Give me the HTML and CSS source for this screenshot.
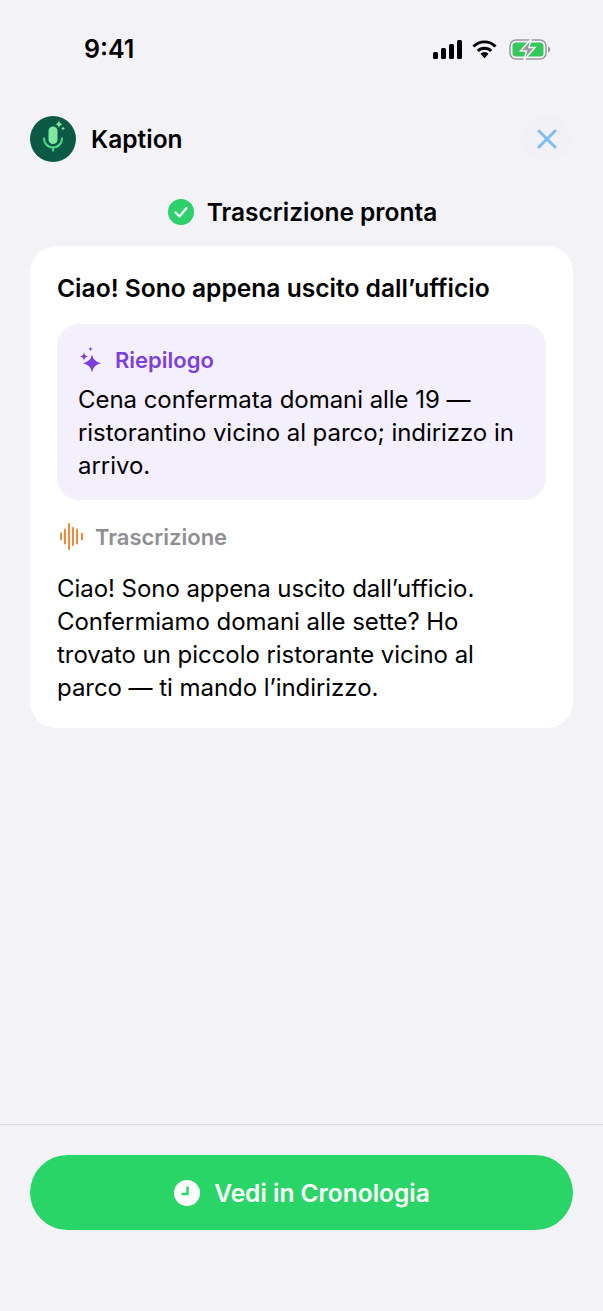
FILE: index.html
```html
<!DOCTYPE html>
<html>
<head>
  <title>Kaption</title>
  <link rel="stylesheet" href="styles.css">
</head>
<body>
  <div class="screen">
    <div class="status-bar">
      <span class="clock">9:41</span>
      <div class="status-icons">
        <svg class="signal" width="29" height="19" viewBox="0 0 29 19"><g fill="#000"><rect x="0" y="12" width="5" height="7" rx="1.500"/><rect x="8" y="8" width="5" height="11" rx="1.500"/><rect x="16" y="4" width="5" height="15" rx="1.500"/><rect x="24" y="0" width="5" height="19" rx="1.500"/></g></svg>
        <svg class="wifi" width="25" height="19" viewBox="0 0 26 19"><g fill="none" stroke="#000" stroke-width="3"><path d="M1.500 6.500a16 16 0 0 1 23 0"/><path d="M6 11a10 10 0 0 1 14 0"/></g><path d="M8.800 13.800a6 6 0 0 1 8.400 0L13 18.500z" fill="#000"/></svg>
        <svg width="42" height="21" viewBox="0 0 42 21">
          <rect x="1" y="1" width="36" height="19" rx="6" fill="none" stroke="#9a9a9e" stroke-width="1.500"/>
          <rect x="3.500" y="3.500" width="31" height="14" rx="3.500" fill="#34c759"/>
          <path d="M39 7.500c1.500.4 2.200 1.500 2.200 3s-.7 2.600-2.200 3z" fill="#9a9a9e"/>
          <path d="M22 0 11.500 12h6L15 21l11-12.500h-6z" fill="#9a9a9e" stroke="#f2f2f7" stroke-width="1.500"/>
        </svg>
      </div>
    </div>

    <div class="top-row">
      <div class="brand">
        <div class="logo">
          <svg width="46" height="46" viewBox="0 0 46 46">
            <rect x="18.500" y="10.500" width="9" height="17.500" rx="4.500" fill="#7fe8a0"/>
            <path d="M14 22.500a9 9 0 0 0 18 0" fill="none" stroke="#4fd685" stroke-width="2.200" stroke-linecap="round"/>
            <path d="M23 31.500v3" stroke="#4fd685" stroke-width="2.200" stroke-linecap="round"/>
            <path d="M29 4.500q.6 3.200 3.500 3.800-2.900.6-3.500 3.800-.6-3.200-3.500-3.800 2.900-.6 3.500-3.800zM33 10.500q.3 1.700 2 2-1.700.3-2 2-.3-1.700-2-2 1.700-.3 2-2z" fill="#7fe8a0"/>
          </svg>
        </div>
        <span class="brand-name">Kaption</span>
      </div>
      <div class="close-btn">
        <svg width="20" height="20" viewBox="0 0 20 20"><path d="M2 2l16 16M18 2L2 18" stroke="#7dbcf5" stroke-width="3" stroke-linecap="round"/></svg>
      </div>
    </div>

    <div class="ready-row">
      <svg width="26" height="26" viewBox="0 0 26 26"><circle cx="13" cy="13" r="13" fill="#2dd06a"/><path d="M7.500 13.500l4 4 7-8.500" fill="none" stroke="#fff" stroke-width="2.200" stroke-linecap="round" stroke-linejoin="round"/></svg>
      <span class="ready-text">Trascrizione pronta</span>
    </div>

    <div class="card">
      <div class="card-title">Ciao! Sono appena uscito dall’ufficio</div>

      <div class="summary">
        <div class="summary-head">
          <svg width="25" height="27" viewBox="0 0 25 27" fill="#7c3fdc">
            <path d="M14 8.500q1.300 7.200 9 8.700-7.700 1.500-9 9.300-1.300-7.800-9-9.300 7.700-1.500 9-8.700z"/>
            <path d="M6 6.500q.6 3.400 4 4-3.400.6-4 4-.6-3.400-4-4 3.400-.6 4-4z"/>
            <path d="M12.500 1q.3 1.700 2 2-1.700.3-2 2-.3-1.700-2-2 1.700-.3 2-2z"/>
          </svg>
          <span>Riepilogo</span>
        </div>
        <p class="summary-text">Cena confermata domani alle 19 — ristorantino vicino al parco; indirizzo in arrivo.</p>
      </div>

      <div class="transcript-head">
        <svg width="25" height="27" viewBox="0 0 25 27" fill="none" stroke="#f08a3c" stroke-width="2" stroke-linecap="round">
          <path d="M2 10.500v6M6 6.500v14M10 1v25M14 5v17M18 6.500v14M23 10.500v6"/>
        </svg>
        <span>Trascrizione</span>
      </div>
      <p class="transcript-text">Ciao! Sono appena uscito dall’ufficio. Confermiamo domani alle sette? Ho trovato un piccolo ristorante vicino al parco — ti mando l’indirizzo.</p>
    </div>

    <div class="footer">
      <div class="history-btn">
        <svg width="26" height="26" viewBox="0 0 26 26"><circle cx="13" cy="13" r="13" fill="#fff"/><path d="M13.500 6.500v7.500H7.500" fill="none" stroke="#2ad567" stroke-width="2.400"/></svg>
        <span>Vedi in Cronologia</span>
      </div>
    </div>
  </div>
</body>
</html>
```

FILE: styles.css
```css
body {
  margin: 0;
  background-color: #f2f2f7;
  font-family: 'Inter', 'Liberation Sans', sans-serif;
  color: #000;
}

.screen {
  width: 603px;
  height: 1311px;
  display: flex;
  flex-direction: column;
  overflow: hidden;
}

.status-bar {
  display: flex;
  justify-content: space-between;
  align-items: center;
  height: 34px;
  padding: 32px 52px 0 84px;
}

.clock {
  font-size: 25px;
  font-weight: 600;
}

.status-icons {
  display: flex;
  align-items: center;
}

.signal {
  margin-right: 10px;
}

.wifi {
  margin-right: 12px;
}

.top-row {
  display: flex;
  justify-content: space-between;
  align-items: center;
  margin-top: 50px;
  padding: 0 33px 0 30px;
}

.brand {
  display: flex;
  align-items: center;
  gap: 15px;
}

.logo {
  width: 46px;
  height: 46px;
  border-radius: 50%;
  background-color: #0c5946;
}

.brand-name {
  font-size: 24.5px;
  font-weight: 600;
}

.close-btn {
  width: 46px;
  height: 46px;
  border-radius: 50%;
  background-color: #f0f0f5;
  display: flex;
  justify-content: center;
  align-items: center;
}

.ready-row {
  display: flex;
  justify-content: center;
  align-items: center;
  gap: 13px;
  margin-top: 35px;
  padding-left: 2px;
}

.ready-text {
  font-size: 24.5px;
  font-weight: 600;
}

.card {
  margin: 19px 30px 0;
  padding: 26px 27px 24px;
  background-color: #fff;
  border-radius: 26px;
}

.card-title {
  font-size: 24.6px;
  font-weight: 600;
  line-height: 32px;
}

.summary {
  margin-top: 20px;
  padding: 22px 21px 18px 21px;
  background-color: #f4effd;
  border-radius: 22px;
}

.summary-head {
  display: flex;
  align-items: center;
  gap: 12px;
  color: #7c3fdc;
  font-size: 22px;
  font-weight: 600;
}

.summary-text {
  margin: 10px 0 0;
  font-size: 24px;
  line-height: 33px;
  letter-spacing: -0.05px;
}

.transcript-head {
  display: flex;
  align-items: center;
  gap: 11px;
  margin-top: 23px;
  padding-left: 2px;
  color: #8e8e93;
  font-size: 22px;
  font-weight: 600;
}

.transcript-text {
  margin: 22px 0 0;
  max-width: 470px;
  font-size: 24px;
  line-height: 33px;
  letter-spacing: -0.05px;
}

.footer {
  margin-top: auto;
  height: 187px;
  padding: 30px 30px 0;
  box-sizing: border-box;
  border-top: 1px solid #dcdce0;
}

.history-btn {
  height: 75px;
  border-radius: 38px;
  background-color: #2ad567;
  color: #fff;
  display: flex;
  justify-content: center;
  align-items: center;
  gap: 14px;
  padding-left: 1px;
  font-size: 24.5px;
  font-weight: 600;
}
```
